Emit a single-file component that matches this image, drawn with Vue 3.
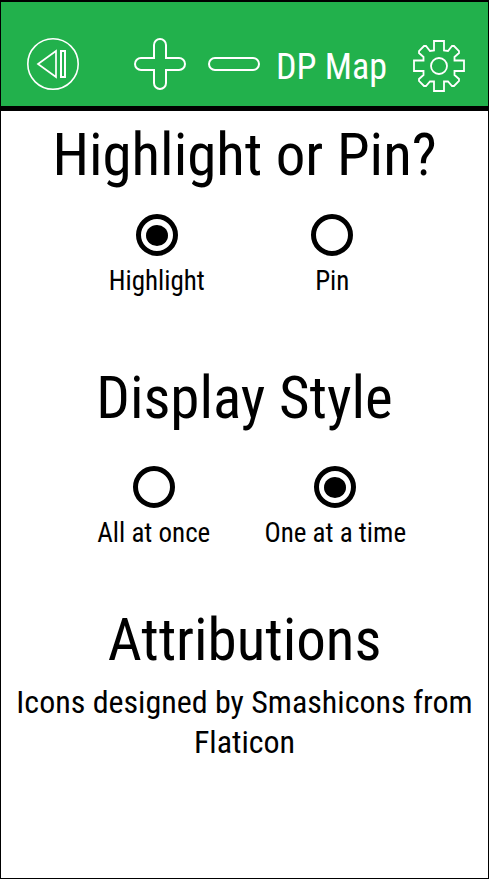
<script setup>
import { ref } from 'vue'

const marker = ref('highlight')
const display = ref('single')
</script>

<template>
  <div class="screen">
    <header class="bar">
      <button class="icon" type="button" aria-label="Back">
        <svg width="52" height="52" viewBox="0 0 52 52">
          <circle cx="26" cy="26" r="25.2" stroke-width="1.6" />
          <path d="M29 13V39L11 26Z" stroke-width="1.7" />
          <rect x="34" y="13" width="4" height="26" />
        </svg>
      </button>
      <div class="tools">
        <button class="icon" type="button" aria-label="Zoom in">
          <svg width="52" height="52" viewBox="0 0 52 52">
            <path d="M20 7a6 6 0 0 1 12 0V20H45a6 6 0 0 1 0 12H32V45a6 6 0 0 1-12 0V32H7a6 6 0 0 1 0-12H20Z" />
          </svg>
        </button>
        <button class="icon" type="button" aria-label="Zoom out">
          <svg width="52" height="52" viewBox="0 0 52 52">
            <rect x="1" y="20" width="50" height="12" rx="6" />
          </svg>
        </button>
      </div>
      <h1 class="title">DP Map</h1>
      <button class="icon" type="button" aria-label="Settings">
        <svg width="52" height="56" viewBox="0 -4 52 56">
          <path
            d="M21 1H31V10.5L35 11L39 6H41L46 11V13L41.5 17V20.5H51V31H41.5V35L46 39V41L41 46H39L35 41.5H31V51H21V41.5H17L13 46H11L6 41V39L10.5 35V31H1V20.5H10.5V17L6 13V11L11 6H13L17 11L21 10.5Z"
            stroke-width="1.8" />
          <circle cx="26" cy="26" r="8" stroke-width="1.8" />
        </svg>
      </button>
    </header>

    <main class="content">
      <section class="group">
        <h2 id="marker-heading">Highlight or Pin?</h2>
        <div class="options" role="radiogroup" aria-labelledby="marker-heading">
          <label class="option">
            <input v-model="marker" type="radio" name="marker" value="highlight" />
            <span>Highlight</span>
          </label>
          <label class="option">
            <input v-model="marker" type="radio" name="marker" value="pin" />
            <span>Pin</span>
          </label>
        </div>
      </section>

      <section class="group">
        <h2 id="display-heading">Display Style</h2>
        <div class="options display" role="radiogroup" aria-labelledby="display-heading">
          <label class="option">
            <input v-model="display" type="radio" name="display" value="all" />
            <span>All at once</span>
          </label>
          <label class="option">
            <input v-model="display" type="radio" name="display" value="single" />
            <span>One at a time</span>
          </label>
        </div>
      </section>

      <section class="group">
        <h2>Attributions</h2>
        <p class="credit">Icons designed by Smashicons from Flaticon</p>
      </section>
    </main>
  </div>
</template>

<style>
body {
  margin: 0;
  background: #fff;
}
</style>

<style scoped>
.screen {
  box-sizing: border-box;
  min-height: 100vh;
  border: 1px solid #000;
  border-top-width: 2px;
  font-family: "Arial Narrow", "Roboto Condensed", "Liberation Sans", sans-serif;
  color: #000;
}

.bar {
  display: flex;
  align-items: center;
  height: 104px;
  box-sizing: content-box;
  padding: 0 23px 0 26px;
  border-bottom: 5px solid #000;
  background: #22b14c;
  color: #fff;
}

.icon {
  display: block;
  flex: none;
  padding: 20px 0 0;
  border: 0;
  background: none;
  color: inherit;
  cursor: pointer;
}

.icon svg {
  display: block;
  fill: none;
  stroke: currentColor;
  stroke-width: 2;
}

.tools {
  display: flex;
  flex: 1;
  justify-content: flex-end;
  gap: 22px;
}

.title {
  margin: 0 26px 0 16px;
  padding-top: 26px;
  font-size: 36px;
  line-height: 40px;
  font-weight: 400;
  white-space: nowrap;
}

.content {
  padding: 8px 12px;
  text-align: center;
}

h2 {
  margin: 0;
  font-size: 59px;
  line-height: 72px;
  font-weight: 400;
}

.options {
  display: grid;
  grid-template-columns: 1fr 1fr;
  padding: 23px 56px 64px;
}

.options.display {
  padding: 32px 50px 54px;
}

.option {
  display: flex;
  flex-direction: column;
  align-items: center;
  gap: 8px;
  font-size: 27px;
  line-height: 34px;
  white-space: nowrap;
  cursor: pointer;
}

.option input {
  appearance: none;
  display: grid;
  place-items: center;
  box-sizing: border-box;
  width: 42px;
  height: 42px;
  margin: 0;
  border: 5px solid #000;
  border-radius: 50%;
  background: #fff;
}

.option input:checked::before {
  content: "";
  width: 22px;
  height: 21px;
  border-radius: 50%;
  background: #000;
}

.credit {
  margin: 6px 0 0;
  font-size: 32px;
  line-height: 40px;
}
</style>
